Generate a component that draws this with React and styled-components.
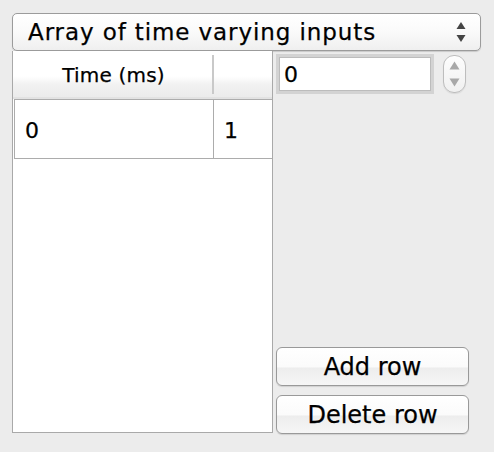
import styled, { createGlobalStyle } from "styled-components"

const GlobalStyle = createGlobalStyle`
	html, body {
		margin: 0;
		padding: 0;
		background: #ececec;
	}
	body {
		font-family: "DejaVu Sans", "Liberation Sans", sans-serif;
		color: #000;
		-webkit-text-stroke: 0.25px #000;
	}
`

const Window = styled.div`
	width: 494px;
	height: 452px;
	box-sizing: border-box;
	padding: 13px 13px 0 12px;
	display: flex;
	flex-direction: column;
`

const Combo = styled.div`
	height: 38px;
	box-sizing: border-box;
	border: 1px solid #9b9b9b;
	border-radius: 5px;
	background: linear-gradient(#ffffff, #fafafa 50%, #efefef);
	box-shadow: 0 1px 1px rgba(0, 0, 0, 0.15);
	display: flex;
	align-items: center;
	justify-content: space-between;
	padding: 0 14px 0 15px;
	font-size: 23px;
	letter-spacing: 0.9px;
`

const Body = styled.div`
	display: flex;
	gap: 3px;
	align-items: flex-start;
`

const Table = styled.div`
	width: 261px;
	height: 382px;
	box-sizing: border-box;
	border: 1px solid #a9a9a9;
	border-top: none;
	background: #fff;
	overflow: hidden;
`

const HeaderRow = styled.div`
	display: flex;
	height: 46px;
	background: linear-gradient(#ffffff, #ffffff 55%, #f2f2f2 72%, #ebebeb);
	border-bottom: 2px solid #e2e2e2;
`

const HeaderCell = styled.div`
	width: ${p => p.$w}px;
	flex: none;
	display: flex;
	align-items: center;
	justify-content: center;
	font-size: 20px;
	letter-spacing: 0.2px;
	position: relative;
	padding-top: 1px;
	&::after {
		content: "";
		display: ${p => (p.$divider ? "block" : "none")};
		position: absolute;
		right: 0;
		top: 4px;
		bottom: 3px;
		width: 2px;
		background: #c9c9c9;
	}
`

const DataRow = styled.div`
	display: flex;
	height: 60px;
	margin-left: 1px;
	box-sizing: border-box;
	border: 1px solid #acacac;
	border-right: none;
`

const DataCell = styled.div`
	width: ${p => p.$w}px;
	flex: none;
	box-sizing: border-box;
	display: flex;
	align-items: center;
	padding-left: 10px;
	padding-top: 2px;
	font-size: 22px;
	border-right: ${p => (p.$divider ? "1px solid #acacac" : "none")};
`

const Side = styled.div`
	width: 193px;
	height: 383px;
	display: flex;
	flex-direction: column;
	justify-content: space-between;
	padding-top: 3px;
	box-sizing: border-box;
`

const FieldRow = styled.div`
	display: flex;
	align-items: center;
	gap: 9px;
`

const Field = styled.div`
	width: 158px;
	height: 40px;
	box-sizing: border-box;
	border: 3px solid #d3d3d3;
	outline: 1px solid #bcbcbc;
	outline-offset: -4px;
	background: #fff;
	display: flex;
	align-items: center;
	padding-left: 5px;
	padding-top: 1px;
	font-size: 22px;
`

const Spinner = styled.div`
	width: 23px;
	height: 38px;
	box-sizing: border-box;
	border: 1px solid #bdbdbd;
	border-radius: 11px;
	background: linear-gradient(#fdfdfd, #f0f0f0);
	box-shadow: 0 1px 1px rgba(0, 0, 0, 0.08);
	display: flex;
	flex-direction: column;
	align-items: center;
	justify-content: center;
	gap: 8px;
`

const Buttons = styled.div`
	display: flex;
	flex-direction: column;
	gap: 9px;
`

const Button = styled.button`
	width: 193px;
	height: 39px;
	box-sizing: border-box;
	border: 1px solid #999;
	border-radius: 6px;
	background: linear-gradient(#ffffff, #fbfbfb 50%, #ededed 55%, #f6f6f6);
	box-shadow: 0 1px 1px rgba(0, 0, 0, 0.12);
	font-family: "DejaVu Sans", sans-serif;
	font-size: 24px;
	color: #000;
	-webkit-text-stroke: 0.25px #000;
	padding: 0;
	padding-top: 1px;
`

function Updown({ color, size }) {
	return (
		<svg width={size} height={size * 2 + 4} viewBox="0 0 10 24">
			<path d="M5 2 L9.5 9 L0.5 9 Z" fill={color} />
			<path d="M0.5 15 L9.5 15 L5 22 Z" fill={color} />
		</svg>
	)
}

function Arrow({ up, color }) {
	return (
		<svg width="11" height="9" viewBox="0 0 11 9">
			<path d={up ? "M5.5 0.5 L10.5 8.5 L0.5 8.5 Z" : "M0.5 0.5 L10.5 0.5 L5.5 8.5 Z"} fill={color} />
		</svg>
	)
}

export default function App() {
	return (
		<Window>
			<GlobalStyle />
			<Combo>
				<span>Array of time varying inputs</span>
				<Updown color="#444" size={10} />
			</Combo>
			<Body>
				<Table>
					<HeaderRow>
						<HeaderCell $w={201} $divider>Time (ms)</HeaderCell>
						<HeaderCell $w={70}></HeaderCell>
					</HeaderRow>
					<DataRow>
						<DataCell $w={199} $divider>0</DataCell>
						<DataCell $w={70}>1</DataCell>
					</DataRow>
				</Table>
				<Side>
					<FieldRow>
						<Field>0</Field>
						<Spinner>
							<Arrow up color="#a8a8a8" />
							<Arrow color="#a8a8a8" />
						</Spinner>
					</FieldRow>
					<Buttons>
						<Button>Add row</Button>
						<Button>Delete row</Button>
					</Buttons>
				</Side>
			</Body>
		</Window>
	)
}
